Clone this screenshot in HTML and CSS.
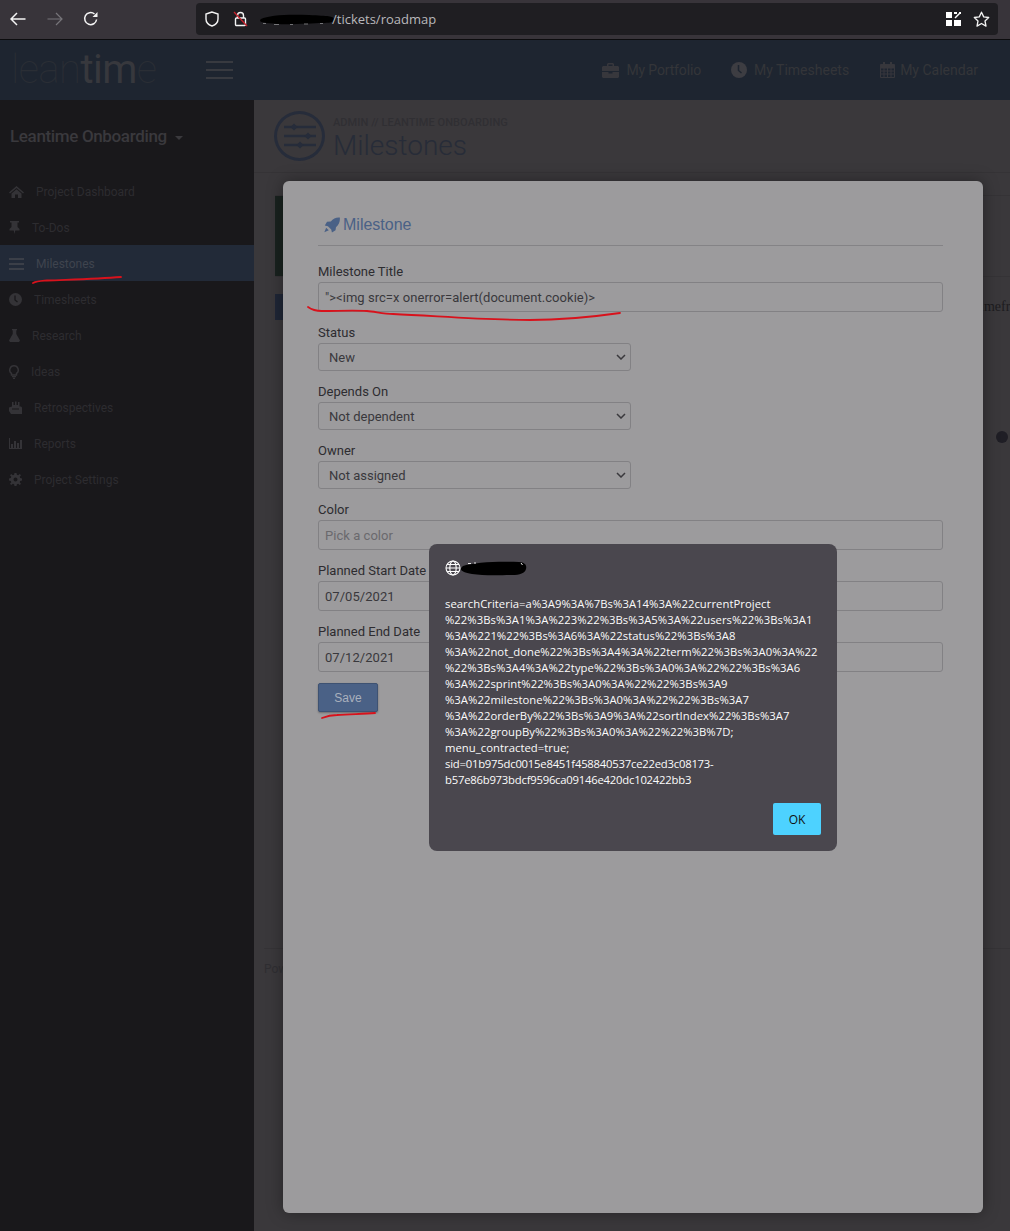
FILE: index.html
```html
<!DOCTYPE html>
<html lang="en">
<head>
    <meta charset="UTF-8">
    <title>Milestones</title>
    <link rel="stylesheet" href="styles.css">
</head>
<body>
<div id="page">
    <!-- browser toolbar -->
    <div class="toolbar">
        <svg class="tb-icon back" width="16" height="14" viewBox="0 0 16 14"><path d="M7 1 1 7l6 6M1 7h14.500" fill="none" stroke="#f4f4f4" stroke-width="1.500"/></svg>
        <svg class="tb-icon fwd" width="16" height="14" viewBox="0 0 16 14"><path d="m9 1 6 6-6 6M15 7H.5" fill="none" stroke="#77757a" stroke-width="1.200"/></svg>
        <svg class="tb-icon reload" width="16" height="16" viewBox="0 0 16 16"><path d="M13.600 8.500A6 6 0 1 1 11.500 3" fill="none" stroke="#f4f4f4" stroke-width="1.500"/><path d="M14.500 1v5h-5z" fill="#f4f4f4"/></svg>
        <div class="urlbar">
            <svg class="shield" width="14" height="16" viewBox="0 0 14 16"><path d="M7 1 1 3v5c0 3.500 3 6 6 7 3-1 6-3.500 6-7V3z" fill="none" stroke="#f4f4f4" stroke-width="1.400"/></svg>
            <svg class="lock" width="15" height="16" viewBox="0 0 15 16"><path d="M4.500 7V4.500a3 3 0 0 1 6 0V7" fill="none" stroke="#f4f4f4" stroke-width="1.400"/><rect x="2.500" y="7" width="10" height="7.500" rx="1" fill="none" stroke="#f4f4f4" stroke-width="1.400"/><path d="M1 1l13 14" stroke="#c8202c" stroke-width="1.300"/></svg>
            <svg class="blot" width="74" height="14" viewBox="0 0 74 14"><path d="M1 7c7-4 28-5 48-4s24 1 25 4-3 4-12 4-30 2-45 1S-2 10 1 7z" fill="#000"/><path d="M3 11.500h3M14 12.500h5M30 12.500h3M44 12h4M60 11.500h3" stroke="#8c8b8e" stroke-width=".8"/></svg>
            <span class="url">/tickets/roadmap</span>
            <span class="url-right">
                <svg width="15" height="14" viewBox="0 0 15 14"><path d="M0 0h6v6H0zM0 8h6v6H0zM8 8h7v6H8zM8 0h3v2H8zM13 0h2v2h-2z" fill="#fff"/><path d="m9 6 5-5" stroke="#fff" stroke-width="1.500"/></svg>
                <svg width="17" height="16" viewBox="0 0 17 16"><path d="m8.500 1.200 2.200 4.700 5 .6-3.700 3.500 1 5.100-4.500-2.600L4 15.100l1-5.100L1.300 6.500l5-.6z" fill="none" stroke="#f4f4f4" stroke-width="1.300" stroke-linejoin="round"/></svg>
            </span>
        </div>
    </div>

    <!-- app header -->
    <div class="header">
        <div class="logo"><span class="logo-thin">lean</span><span class="logo-bold">tim</span><span class="logo-thin">e</span></div>
        <div class="burger"><i></i><i></i><i></i></div>
        <ul class="headmenu">
            <li>
                <svg width="17" height="15" viewBox="0 0 17 15"><path d="M6 0h5l1 1v2h4l1 1v4H0V4l1-1h4V1zm.500 1.500V3h4V1.500zM0 9h6.500v1.500h4V9H17v5l-1 1H1l-1-1z" fill="#37373c"/></svg>
                My Portfolio
            </li>
            <li>
                <svg width="16" height="16" viewBox="0 0 16 16"><circle cx="8" cy="8" r="8" fill="#3d3d42"/><path d="M7.500 3v5.500l3 2.500" fill="none" stroke="#1e2530" stroke-width="1.500"/></svg>
                My Timesheets
            </li>
            <li>
                <svg width="15" height="16" viewBox="0 0 15 16"><path d="M.5 2.500h14v13H.5zM.5 6h14M.5 9h14M.5 12h14M4 6v9.500M7.500 6v9.500M11 6v9.500" fill="none" stroke="#37373c"/><path d="M3 0h2v4H3zM10 0h2v4h-2zM.5 2.500h14V6H.5z" fill="#37373c"/></svg>
                My Calendar
            </li>
        </ul>
    </div>

    <div class="body">
        <div class="sidebar">
            <div class="project">Leantime Onboarding <span class="caret"></span></div>
            <ul class="leftmenu">
                <li>
                    <svg width="15" height="12" viewBox="0 0 15 12"><path d="M7.500 0 15 6.500l-1 1-6.500-5.600L1 7.500l-1-1zM2.500 7.500l5-4.300 5 4.300V12H9V8.500H6V12H2.500z" fill="#343337"/></svg>
                    Project Dashboard
                </li>
                <li>
                    <svg width="11" height="13" viewBox="0 0 11 13"><path d="M1 0h9v1.500H8.500V6l2 2v1.500H6.300L5.500 13l-.8-3.500H.5V8l2-2V1.500H1z" fill="#343337"/></svg>
                    To-Dos
                </li>
                <li class="active">
                    <svg width="15" height="12" viewBox="0 0 15 12"><path d="M0 0h15v2H0zM0 5h15v2H0zM0 10h15v2H0z" fill="#3b3f48"/></svg>
                    Milestones
                </li>
                <li>
                    <svg width="13" height="13" viewBox="0 0 13 13"><circle cx="6.500" cy="6.500" r="6.500" fill="#343337"/><path d="M6 2.500V7l2.500 2" fill="none" stroke="#19181b" stroke-width="1.300"/></svg>
                    Timesheets
                </li>
                <li>
                    <svg width="11" height="13" viewBox="0 0 11 13"><path d="M3 0h5v1.200H7.300V5L11 11.500 10 13H1L0 11.500 3.700 5V1.200H3z" fill="#343337"/></svg>
                    Research
                </li>
                <li>
                    <svg width="10" height="14" viewBox="0 0 10 14"><path d="M5 .8a4.200 4.200 0 0 1 2.500 7.600V10h-5V8.400A4.200 4.200 0 0 1 5 .8z" fill="none" stroke="#343337" stroke-width="1.500"/><path d="M3 11h4v1.200H3zM4 12.800h2V14H4z" fill="#343337"/></svg>
                    Ideas
                </li>
                <li>
                    <svg width="13" height="13" viewBox="0 0 13 13"><path d="M3 1h1.500v3H6V.500h1.500V4H9V1h1.500v4.500H12l1 1V13H2l-2-3V6.500l3-1z" fill="#343337"/><path d="M3 8h7" stroke="#19181b"/></svg>
                    Retrospectives
                </li>
                <li>
                    <svg width="13" height="11" viewBox="0 0 13 11"><path d="M0 0h1v10h12v1H0zM2 6h2v4H2zM5 3h2v7H5zM8 5h2v5H8zM11 2h2v8h-2z" fill="#343337"/></svg>
                    Reports
                </li>
                <li>
                    <svg width="13" height="13" viewBox="0 0 13 13"><path d="M5.500 0h2l.4 1.800 1.300.5L10.800 1l1.200 1.200-1.300 1.600.5 1.300 1.800.4v2l-1.800.4-.5 1.300 1.300 1.600-1.200 1.200-1.600-1.300-1.300.5-.4 1.800h-2l-.4-1.800-1.300-.5L2.200 12 1 10.800l1.300-1.600-.5-1.300L0 7.500v-2l1.800-.4.500-1.300L1 2.200 2.200 1l1.600 1.300 1.300-.5zm1 4.500a2 2 0 1 0 0 4 2 2 0 0 0 0-4z" fill="#343337" fill-rule="evenodd"/></svg>
                    Project Settings
                </li>
            </ul>
        </div>

        <div class="main">
            <div class="pageheader">
                <div class="pageicon">
                    <svg width="34" height="30" viewBox="0 0 34 30"><path d="M1 6h32M1 15h32M1 24h32" stroke="#262c3a" stroke-width="2.500"/><path d="M11 2.500l3.500 3.500-3.500 3.500L7.500 6zM25 11.500l3.500 3.500-3.500 3.500-3.500-3.500zM17 20.500l3.500 3.500-3.500 3.500-3.500-3.500z" fill="#262c3a"/></svg>
                </div>
                <div class="pagetitle">
                    <h5>ADMIN // LEANTIME ONBOARDING</h5>
                    <h1>Milestones</h1>
                </div>
            </div>
            <div class="maincontent">
                <div class="panel">
                    <div class="banner"><div class="banner-block"></div></div>
                    <div class="filterbar">
                        <div class="filterbtn"></div>
                        <span class="filtertext">Timeframe</span>
                    </div>
                    <i class="gantt-dot"></i>
                </div>
                <div class="footer">Powered by Leantime</div>
            </div>
        </div>
    </div>

    <!-- milestone modal -->
    <div class="modal">
        <h4 class="modal-title">
            <svg width="17" height="16" viewBox="0 0 19 17"><path d="M18.800.2c.5 4.500-1 8-4.300 10.800l-.5 3.500-4 2.500-.8-3.500-3.700-3.700L2 9l2.500-4.200 4.200-.3C11.500 1.500 14.500-.2 18.800.2zM3.500 11.500l3 3L1.500 16.500z" fill="#4a6186"/></svg>
            Milestone
        </h4>
        <label>Milestone Title</label>
        <input class="field" type="text" value="&quot;&gt;&lt;img src=x onerror=alert(document.cookie)&gt;">
        <label>Status</label>
        <select class="picker"><option>New</option></select>
        <label>Depends On</label>
        <select class="picker"><option>Not dependent</option></select>
        <label>Owner</label>
        <select class="picker"><option>Not assigned</option></select>
        <label>Color</label>
        <input class="field" type="text" placeholder="Pick a color">
        <label>Planned Start Date</label>
        <input class="field" type="text" value="07/05/2021">
        <label>Planned End Date</label>
        <input class="field" type="text" value="07/12/2021">
        <button class="save">Save</button>
    </div>

    <!-- browser alert -->
    <div class="alert">
        <div class="alert-origin">
            <svg width="16" height="16" viewBox="0 0 16 16"><g fill="none" stroke="#fff" stroke-width="1.100"><circle cx="8" cy="8" r="7"/><ellipse cx="8" cy="8" rx="3.200" ry="7"/><path d="M1 8h14M2 4.500h12M2 11.500h12"/></g></svg>
            <svg width="66" height="16" viewBox="0 0 66 16"><path d="M2 6C12 2 40 1 58 2c6 .5 8 3 7 7-1 4-6 6-14 6s-28 1-40-1S-2 9 2 6z" fill="#000"/><path d="M7 3.500h3M13 3h2M60 3l1.500 2" stroke="#e8e8e8" stroke-width="1"/></svg>
        </div>
        <div class="alert-text">searchCriteria=a%3A9%3A%7Bs%3A14%3A%22currentProject<br>%22%3Bs%3A1%3A%223%22%3Bs%3A5%3A%22users%22%3Bs%3A1<br>%3A%221%22%3Bs%3A6%3A%22status%22%3Bs%3A8<br>%3A%22not_done%22%3Bs%3A4%3A%22term%22%3Bs%3A0%3A%22<br>%22%3Bs%3A4%3A%22type%22%3Bs%3A0%3A%22%22%3Bs%3A6<br>%3A%22sprint%22%3Bs%3A0%3A%22%22%3Bs%3A9<br>%3A%22milestone%22%3Bs%3A0%3A%22%22%3Bs%3A7<br>%3A%22orderBy%22%3Bs%3A9%3A%22sortIndex%22%3Bs%3A7<br>%3A%22groupBy%22%3Bs%3A0%3A%22%22%3B%7D;<br>menu_contracted=true;<br><span class="hex">sid=01b975dc0015e8451f458840537ce22ed3c08173-<br>b57e86b973bdcf9596ca09146e420dc102422bb3</span></div>
        <div class="alert-actions"><button class="ok">OK</button></div>
    </div>

    <!-- red marker lines -->
    <svg class="marks" width="1010" height="1231" viewBox="0 0 1010 1231">
        <g fill="none" stroke="#d8121c" stroke-width="1.800" stroke-linecap="round">
            <path d="M33 283c4-2 8-2 14-2.500 25-1 50-1.500 74-3.500"/>
            <path d="M308 307c4 3 8 4 14 4 15 0 32-1 45 0 8 .5 16 3 26 3 45 2 90 6 137 6 32 0 62-3 90-7"/>
            <path d="M322 718c5-2 10-3 15-3 14-1 26-1 38-2"/>
        </g>
    </svg>
</div>
</body>
</html>
```

FILE: styles.css
```css
*{box-sizing: border-box;}
html, body{margin:0; padding:0;}
body{font-family:Roboto, "Liberation Sans", sans-serif; background:#3a383b;}
ul{list-style:none; margin:0; padding:0;}

#page{position:relative; width:1010px; height:1231px; overflow:hidden; display:flex; flex-direction:column;}

/* browser toolbar */
.toolbar{height:40px; flex:none; display:flex; align-items:center; background:#38343a; border-bottom:1px solid #0c0c0e; padding:0 12px 1px 10px;}
.tb-icon{flex:none;}
.fwd{margin-left:21px;}
.reload{margin-left:20px;}
.urlbar{margin-left:97px; width:802px; height:32px; flex:none; display:flex; align-items:center; background:#1f1e22; border-radius:4px; padding:0 8px 0 9px;}
.lock{margin-left:14px;}
.blot{margin-left:12px;}
.url{margin-left:-2px; font-family:"Open Sans", sans-serif; font-size:13px; color:#b9b8bb;}
.url-right{margin-left:auto; display:flex; align-items:center; gap:12px;}

/* app header */
.header{height:60px; flex:none; display:flex; align-items:center; background:#1e2530;}
.logo{width:206px; padding-left:11px; font-size:40px; line-height:60px; letter-spacing:-0.5px; white-space:nowrap;}
.logo-thin{font-weight:100; color:#2a2e35;}
.logo-bold{font-weight:400; color:#37383d;}
.burger{width:27px; display:flex; flex-direction:column; gap:6px;}
.burger i{display:block; height:2px; background:#383a40;}
.headmenu{margin-left:auto; display:flex; gap:30px; padding-right:32px;}
.headmenu li{display:flex; align-items:center; gap:7px; font-size:14px; color:#343539;}
.headmenu li:first-child{letter-spacing:-0.15px;}
.headmenu li:last-child{gap:5px; margin-left:1px;}

/* sidebar and main */
.body{flex:1; display:flex; min-height:0;}
.sidebar{width:254px; flex:none; background:#19181b;}
.project{height:73px; padding:26px 0 0 10px; font-size:17px; font-weight:500; color:#3a393d; letter-spacing:-0.35px;}
.caret{display:inline-block; margin-left:4px; vertical-align:middle; border:4px solid transparent; border-top-color:#3a393d; border-bottom:0;}
.leftmenu li{height:36px; display:flex; align-items:center; padding:1px 0 0 9px; font-size:12px; color:#2d2c30;}
.leftmenu li svg{margin-right:12px; flex:none;}
.leftmenu li.active{background:#222a38; color:#3f444e;}

.main{flex:1; min-width:0; display:flex; flex-direction:column;}
.pageheader{height:73px; flex:none; display:flex; padding:11px 0 0 20px; border-bottom:1px solid #353336;}
.pageicon{width:51px; height:50px; border:3px solid #262c3a; border-radius:50%; display:flex; align-items:center; justify-content:center;}
.pagetitle{margin-left:8px;}
.pagetitle h5{margin:6px 0 0; font-size:11px; line-height:12px; font-weight:500; letter-spacing:.07px; color:#302f33;}
.pagetitle h1{margin:0; font-size:28px; line-height:34px; font-weight:300; color:#272c38;}

.maincontent{flex:1; display:flex; flex-direction:column; padding:22px 0 0 21px;}
.panel{position:relative; height:753px; flex:none;}
.banner{height:82px; border-top:1px solid #353336; border-bottom:1px solid #353336;}
.banner-block{width:100px; height:100%; background:#19221f;}
.filterbar{margin-top:17px; height:26px; display:flex; align-items:center;}
.filterbtn{width:100px; height:100%; flex:none; background:#1f2636;}
.filtertext{margin-left:597px; flex:none; white-space:nowrap; font-family:"Liberation Serif", serif; font-size:14px; color:#1d1c1f;}
.gantt-dot{position:absolute; left:721px; top:236px; width:12px; height:12px; border-radius:50%; background:#1f1e25;}
.footer{margin-left:-11px; border-top:1px solid #353336; padding-top:13px; font-size:12px; color:#2f2e32;}

/* milestone modal */
.modal{position:absolute; left:283px; top:181px; width:700px; height:1032px; background:#9c9b9d; border-radius:6px; box-shadow:0 0 16px rgba(0,0,0,0.35); padding:33px 40px 0 35px;}
.modal-title{margin:0 0 15px; height:32px; padding:2px 0 12px 5px; border-bottom:1px solid #848386; display:flex; align-items:center; gap:3px; font-family:"Liberation Sans", sans-serif; font-size:16px; line-height:20px; font-weight:400; color:#4a6186;}
.modal label{display:block; height:20px; margin-bottom:1px; font-size:13px; line-height:22px; color:#2d2c30;}
.field{display:block; width:625px; height:30px; margin:0 0 10px; padding:0 6px; border:1px solid #828184; border-radius:3px; background:transparent; font-family:Roboto, sans-serif; font-size:13px; letter-spacing:.04px; color:#39383c; outline:none;}
.field::placeholder{color:#6a696d; opacity:1;}
.picker{display:block; width:313px; height:28px; margin:0 0 10px; padding:0 10px; border:1px solid #828184; border-radius:3px; appearance:none; background:#9c9b9d url("data:image/svg+xml,%3Csvg xmlns='http://www.w3.org/2000/svg' width='10' height='6' viewBox='0 0 10 6'%3E%3Cpath d='M1 1l4 4 4-4' fill='none' stroke='%233a393d' stroke-width='1.500'/%3E%3C/svg%3E") no-repeat right 4px center; font-family:Roboto, sans-serif; font-size:13px; color:#39383c;}
.save{display:block; margin-top:11px; width:60px; height:29px; padding:0; border:1px solid #3e5272; border-radius:2px; background:#4a6186; font-family:"Liberation Sans", sans-serif; font-size:12px; color:#a9b0bd; box-shadow:0 1px 2px rgba(0,0,0,0.3);}

/* browser alert */
.alert{position:absolute; left:429px; top:544px; width:408px; height:307px; background:#4a474e; border-radius:8px; padding:16px;}
.alert-origin{height:16px; display:flex; align-items:center;}
.alert-text{margin-top:20px; font-family:"Open Sans", sans-serif; font-size:11.300px; letter-spacing:.03px; line-height:16px; color:#fbfbfb; white-space:nowrap;}
.hex{letter-spacing:-0.23px;}
.alert-actions{margin-top:15px; display:flex; justify-content:flex-end;}
.ok{width:48px; height:32px; padding:0; border:0; border-radius:2px; background:#4dd2ff; font-family:"Open Sans", sans-serif; font-size:12px; color:#111;}

.marks{position:absolute; left:0; top:0; pointer-events:none;}
```
